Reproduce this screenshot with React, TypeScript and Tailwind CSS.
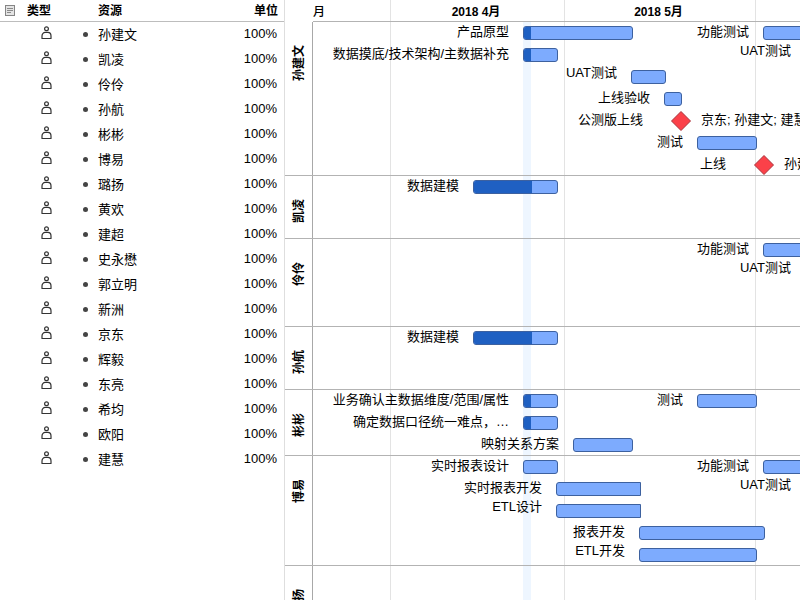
import React from "react";

type Task = {
  label: string;
  start: number;
  end: number;
  done?: number;
  milestone?: boolean;
  continues?: boolean;
  assigned?: string;
};

type Lane = { name: string; height: string; rows: Task[][] };

const resources = [
  "孙建文", "凯凌", "伶伶", "孙航", "彬彬", "博易", "璐扬", "黄欢", "建超",
  "史永懋", "郭立明", "新洲", "京东", "辉毅", "东亮", "希均", "欧阳", "建慧",
];

// Horizontal positions are distances from the left edge of the time axis.
const lanes: Lane[] = [
  {
    name: "孙建文",
    height: "h-[154px]",
    rows: [
      [
        { label: "产品原型", start: 210, end: 320, done: 8 },
        { label: "功能测试", start: 450, end: 510 },
      ],
      [
        { label: "数据摸底/技术架构/主数据补充", start: 210, end: 245, done: 8 },
        { label: "UAT测试", start: 492, end: 527 },
      ],
      [{ label: "UAT测试", start: 318, end: 353 }],
      [{ label: "上线验收", start: 351, end: 369 }],
      [{ label: "公测版上线", start: 358, end: 378, milestone: true, assigned: "京东; 孙建文; 建慧" }],
      [{ label: "测试", start: 384, end: 444 }],
      [{ label: "上线", start: 441, end: 461, milestone: true, assigned: "孙建文" }],
    ],
  },
  {
    name: "凯凌",
    height: "h-[63px]",
    rows: [[{ label: "数据建模", start: 160, end: 245, done: 59 }]],
  },
  {
    name: "伶伶",
    height: "h-[88px]",
    rows: [
      [{ label: "功能测试", start: 450, end: 510 }],
      [{ label: "UAT测试", start: 492, end: 527 }],
    ],
  },
  {
    name: "孙航",
    height: "h-[63px]",
    rows: [[{ label: "数据建模", start: 160, end: 245, done: 59 }]],
  },
  {
    name: "彬彬",
    height: "h-[66px]",
    rows: [
      [
        { label: "业务确认主数据维度/范围/属性", start: 210, end: 245, done: 8 },
        { label: "测试", start: 384, end: 444 },
      ],
      [{ label: "确定数据口径统一难点，…", start: 210, end: 245, done: 8 }],
      [{ label: "映射关系方案", start: 260, end: 320 }],
    ],
  },
  {
    name: "博易",
    height: "h-[110px]",
    rows: [
      [
        { label: "实时报表设计", start: 210, end: 245 },
        { label: "功能测试", start: 450, end: 510 },
      ],
      [
        { label: "实时报表开发", start: 243, end: 328, continues: true },
        { label: "UAT测试", start: 492, end: 527 },
      ],
      [{ label: "ETL设计", start: 243, end: 328, continues: true }],
      [{ label: "报表开发", start: 326, end: 452 }],
      [{ label: "ETL开发", start: 326, end: 444 }],
    ],
  },
  { name: "璐扬", height: "h-[88px]", rows: [] },
];

function NotesIcon() {
  return (
    <svg width="11" height="12" viewBox="0 0 11 12" className="block" aria-hidden="true">
      <rect x="0.5" y="0.5" width="9" height="10" fill="#e4e4e4" stroke="#858585" />
      <path d="M2 3.5h6M2 5.5h6M2 7.5h4" stroke="#8a8a8a" />
    </svg>
  );
}

function PersonIcon() {
  return (
    <svg width="11" height="14" viewBox="0 0 11 14" className="block" fill="none" stroke="#333" strokeWidth="1.2" aria-hidden="true">
      <circle cx="5.5" cy="2.7" r="1.9" />
      <path d="M1 12.5V10C1 7.6 2.6 6.4 4.2 6.4H6.8C8.4 6.4 10 7.6 10 10v2.5z" strokeLinejoin="round" />
    </svg>
  );
}

function Diamond() {
  return (
    <svg width="20" height="20" viewBox="0 0 20 20" className="block shrink-0" aria-hidden="true">
      <path d="M10 0.5 19.5 10 10 19.5 0.5 10z" fill="#fb4149" stroke="#a8323a" />
    </svg>
  );
}

function ResourceTable() {
  return (
    <table className="w-full table-fixed border-separate border-spacing-0">
      <colgroup>
        <col className="w-[27px]" />
        <col className="w-[53px]" />
        <col />
        <col className="w-[80px]" />
      </colgroup>
      <thead className="text-xs font-bold">
        <tr className="h-[22px] text-left">
          <th className="border-b border-[#bdbdbd] p-0 pl-[5px]"><NotesIcon /></th>
          <th className="border-b border-[#bdbdbd] p-0">类型</th>
          <th className="border-b border-[#bdbdbd] p-0 pl-[18px]">资源</th>
          <th className="border-b border-[#bdbdbd] p-0 pr-[6px] text-right">单位</th>
        </tr>
      </thead>
      <tbody>
        {resources.map((name) => (
          <tr key={name} className="h-[25px]">
            <td className="p-0" />
            <td className="p-0 pb-[3px] pl-[14px]"><PersonIcon /></td>
            <td className="p-0">
              <div className="flex items-center gap-[10px] pl-[3px] leading-5">
                <span className="size-[5px] rounded-full bg-[#444]" />
                {name}
              </div>
            </td>
            <td className="p-0 pb-[2px] pr-[7px] text-right leading-5">100%</td>
          </tr>
        ))}
      </tbody>
    </table>
  );
}

function Bar({ task }: { task: Task }) {
  return (
    <div
      className={`mt-1 h-[14px] shrink-0 overflow-hidden border border-[#3d619f] bg-[#7dabfe] ${task.continues ? "rounded-l-[3px]" : "rounded-[3px]"}`}
      style={{ width: task.end - task.start }}
    >
      {task.done && (
        <div className="-mt-px -ml-px h-[14px] bg-[#1f60c2]" style={{ width: task.done }} />
      )}
    </div>
  );
}

function TaskRow({ tasks }: { tasks: Task[] }) {
  return (
    <div className="flex h-[22px] items-start whitespace-nowrap">
      {tasks.map((task, i) => {
        const from = i === 0 ? 0 : tasks[i - 1].end;
        const latin = /^[A-Z]/.test(task.label);
        return (
          <React.Fragment key={task.label}>
            <span
              className={`shrink-0 text-right ${latin ? "leading-[14px]" : "leading-5"} ${task.milestone ? "pr-7" : "pr-[14px]"}`}
              style={{ width: task.start - from }}
            >
              {task.label}
            </span>
            {task.milestone ? (
              <div className="flex gap-[10px] pt-px">
                <Diamond />
                <span className="leading-[18px]">{task.assigned}</span>
              </div>
            ) : (
              <Bar task={task} />
            )}
          </React.Fragment>
        );
      })}
    </div>
  );
}

function Timeline() {
  return (
    <section className="relative min-w-0 flex-1 overflow-hidden">
      <div className="pointer-events-none absolute inset-y-0 right-0 left-7" aria-hidden="true">
        <div className="absolute top-[22px] bottom-0 left-[210px] w-2 bg-[#eef6ff]" />
        <div className="absolute inset-y-0 left-[77px] w-px bg-[#e3e3e3]" />
        <div className="absolute inset-y-0 left-[251px] w-px bg-[#e3e3e3]" />
        <div className="absolute inset-y-0 left-[442px] w-px bg-[#e3e3e3]" />
      </div>
      <header className="relative ml-7 flex h-[22px] border-b border-[#b3b3b3] text-center text-xs leading-6 font-bold whitespace-nowrap">
        <div className="w-[76px] shrink-0 text-left font-medium">月</div>
        <div className="w-[174px] shrink-0">2018 4月</div>
        <div className="w-[191px] shrink-0">2018 5月</div>
      </header>
      <div className="relative">
        {lanes.map((lane) => (
          <div key={lane.name} className={`flex border-b border-[#b3b3b3] ${lane.height}`}>
            <div className="flex w-7 shrink-0 items-start justify-center border-r border-[#a8a8a8] pt-[23px]">
              <h2 className="rotate-180 text-xs font-bold whitespace-nowrap [text-orientation:sideways] [writing-mode:vertical-rl]">
                {lane.name}
              </h2>
            </div>
            <div className="min-w-0 flex-1">
              {lane.rows.map((tasks, i) => (
                <TaskRow key={i} tasks={tasks} />
              ))}
            </div>
          </div>
        ))}
      </div>
    </section>
  );
}

export default function App() {
  return (
    <main
      lang="zh-CN"
      className="flex h-screen overflow-hidden bg-white font-['Liberation_Sans','Noto_Sans_CJK_SC',sans-serif] text-[13px] text-black"
    >
      <aside className="w-[285px] shrink-0 border-r border-[#dedede]">
        <ResourceTable />
      </aside>
      <Timeline />
    </main>
  );
}
